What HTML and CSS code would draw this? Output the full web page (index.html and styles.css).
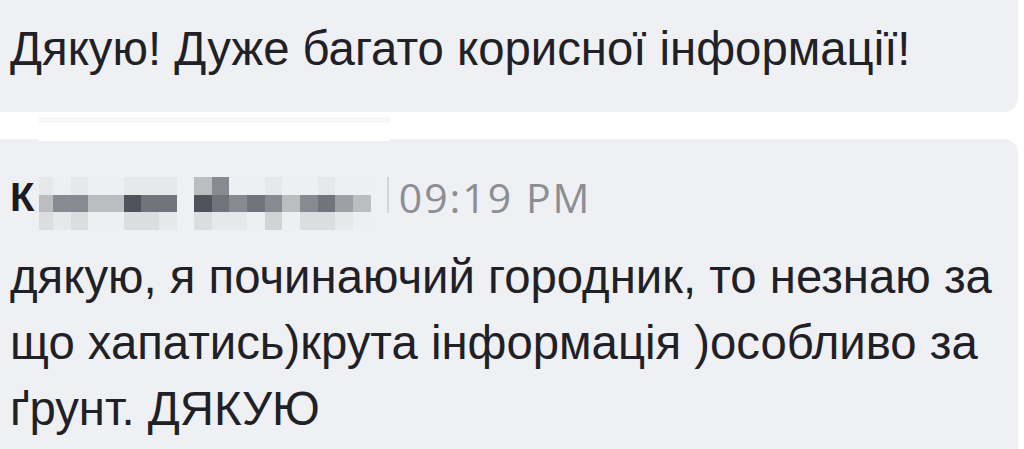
FILE: index.html
```html
<!DOCTYPE html>
<html lang="uk">
	<head>
		<meta charset="UTF-8" />
		<meta name="viewport" content="width=device-width, initial-scale=1.0" />
		<title>Коментарі</title>
		<link rel="stylesheet" href="styles.css">
	</head>
	<body>
		<div class="thread">
			<div class="bubble first">
				<p class="text">Дякую! Дуже багато корисної інформації!</p>
			</div>
			<div class="gap"><div class="strip"></div></div>
			<div class="bubble second">
				<div class="head">
					<span class="name">К</span>
					<div class="blur">
						<div class="grp g1">
							<i class="s1"></i><i class="s0"></i><i class="s1"></i><i class="s0"></i><i class="s0"></i><i class="s1"></i><i class="s1"></i><i class="s1"></i>
							<i class="s4"></i><i class="s6"></i><i class="s6"></i><i class="s4"></i><i class="s4"></i><i class="s9"></i><i class="s7"></i><i class="s7"></i>
							<i class="s2"></i><i class="s1"></i><i class="s2"></i><i class="s0"></i><i class="s0"></i><i class="s2"></i><i class="s2"></i><i class="s1"></i>
						</div>
						<div class="grp g2">
							<i class="s4"></i><i class="s6"></i><i class="s0"></i><i class="s0"></i><i class="s1"></i><i class="s0"></i><i class="s0"></i><i class="s1"></i><i class="s0"></i><i class="s0"></i>
							<i class="s9"></i><i class="s7"></i><i class="s6"></i><i class="s7"></i><i class="s6"></i><i class="s4"></i><i class="s6"></i><i class="s7"></i><i class="s5"></i><i class="s4"></i>
							<i class="s2"></i><i class="s1"></i><i class="s1"></i><i class="s0"></i><i class="s3"></i><i class="s0"></i><i class="s2"></i><i class="s2"></i><i class="s1"></i><i class="s0"></i>
						</div>
					</div>
					<span class="bar"></span>
					<span class="time">09:19 PM</span>
				</div>
				<p class="text body">дякую, я починаючий городник, то незнаю за що хапатись)крута інформація )особливо за ґрунт. ДЯКУЮ</p>
			</div>
		</div>
	</body>
</html>
```
FILE: styles.css
```css
* {
	margin: 0;
	padding: 0;
	box-sizing: border-box;
}
body {
	background: #fff;
	font-family: "Liberation Sans", Arial, sans-serif;
	color: #1f2126;
	overflow: hidden;
}
.thread {
	width: 1038px;
	margin-left: -20px;
}
.bubble {
	background: #eff0f4;
	border-radius: 14px;
	padding: 0 20px 0 30px;
}
.first {
	margin-top: -40px;
	padding-top: 56px;
	padding-bottom: 30px;
}
.text {
	font-size: 47.3px;
	line-height: 66px;
}
.gap {
	height: 27px;
	padding: 5px 0 0 59px;
}
.strip {
	width: 351px;
	height: 24px;
	background: linear-gradient(#f6f7f8 0, #f6f7f8 6px, #fff 6px);
	position: relative;
	z-index: 1;
}
.second {
	padding-top: 38px;
	height: 310px;
	border-radius: 14px 14px 0 0;
}
.head {
	display: flex;
	align-items: flex-start;
	height: 52px;
}
.name {
	font-weight: bold;
	font-size: 40px;
	line-height: 40px;
	width: 29px;
	color: #1a1c21;
}
.blur {
	display: flex;
	gap: 17px;
	height: 52px;
}
.grp {
	display: grid;
	grid-auto-rows: 17.5px;
}
.g1 {
	grid-template-columns: 14px repeat(7, 17.7px);
}
.g2 {
	grid-template-columns: repeat(10, 17.7px);
}
.grp i {
	display: block;
}
.s0 { background: #eeeff2; }
.s1 { background: #e7e8eb; }
.s2 { background: #dcdde1; }
.s3 { background: #d2d3d7; }
.s4 { background: #bcbdc1; }
.s5 { background: #9e9fa4; }
.s6 { background: #888a91; }
.s7 { background: #72747c; }
.s9 { background: #50535b; }
.bar {
	width: 2px;
	height: 36px;
	background: #d4d5d9;
	margin: 0 10px 0 16px;
}
.time {
	font-family: "Open Sans", sans-serif;
	font-size: 41px;
	line-height: 40px;
	color: #8c8e93;
	letter-spacing: 2px;
}
.body {
	margin-top: 15px;
}
```
